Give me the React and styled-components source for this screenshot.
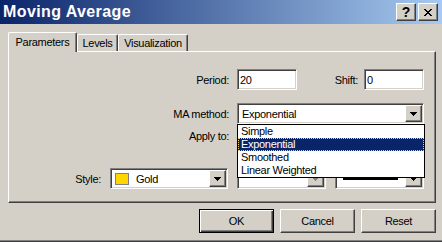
import React from 'react';
import styled, { createGlobalStyle, css } from 'styled-components';

const GlobalStyle = createGlobalStyle`
	html, body {
		margin: 0;
		padding: 0;
		background: #d4d0c8;
	}
	body {
		font-family: "Liberation Sans", Arial, sans-serif;
		font-size: 11px;
		color: #000;
	}
`;

const raised = css`
	border: 1px solid;
	border-color: #ffffff #404040 #404040 #ffffff;
	box-shadow: inset -1px -1px #808080, inset 1px 1px #d4d0c8;
`;
const sunken = css`
	border: 1px solid;
	border-color: #808080 #ffffff #ffffff #808080;
	box-shadow: inset 1px 1px #404040, inset -1px -1px #d4d0c8;
`;

const Window = styled.div`
	width: 442px;
	height: 242px;
	box-sizing: border-box;
	background: #d4d0c8;
	border-bottom: 1px solid #404040;
	box-shadow: inset 0 -1px #808080;
	display: flex;
	flex-direction: column;
	overflow: hidden;
`;

//title bar
const TitleBar = styled.div`
	height: 24px;
	flex: none;
	display: flex;
	align-items: center;
	padding: 0 4px 0 3px;
	background: linear-gradient(to right, #0a246a, #a6caf0);
`;
const Title = styled.span`
	flex: 1;
	color: #fff;
	font-weight: bold;
	font-size: 16px;
	letter-spacing: 0.4px;
	white-space: nowrap;
`;
const TitleButton = styled.div`
	box-sizing: border-box;
	width: 20px;
	height: 18px;
	margin-left: 2px;
	${raised}
	background: #d4d0c8;
	display: flex;
	align-items: center;
	justify-content: center;
	font-weight: bold;
	font-size: 14px;
`;

//body
const Body = styled.div`
	flex: 1;
	padding: 8px 6px 0 8px;
	display: flex;
	flex-direction: column;
`;
const TabStrip = styled.div`
	height: 19px;
	display: flex;
	align-items: flex-end;
	position: relative;
	z-index: 1;
`;
const Tab = styled.div`
	box-sizing: border-box;
	width: ${props => props.$w}px;
	height: ${props => (props.$active ? 20 : 17)}px;
	margin-bottom: ${props => (props.$active ? -1 : 0)}px;
	border-top: 1px solid #fff;
	border-left: 1px solid #fff;
	border-right: 1px solid #404040;
	box-shadow: inset -1px 0 #808080;
	border-radius: 2px 2px 0 0;
	background: #d4d0c8;
	display: flex;
	justify-content: center;
	padding-top: ${props => (props.$active ? 3 : 2)}px;
	letter-spacing: -0.3px;
	white-space: nowrap;
`;
const Panel = styled.div`
	box-sizing: border-box;
	height: 152px;
	border: 1px solid;
	border-color: #fff #404040 #404040 #fff;
	box-shadow: inset -1px -1px #808080;
	display: flex;
	flex-direction: column;
	padding-top: 17px;
`;
const Row = styled.div`
	height: 21px;
	display: flex;
	align-items: center;
	margin-top: ${props => props.$mt || 0}px;
`;
const Label = styled.label`
	flex: none;
	width: ${props => props.$w}px;
	margin-right: ${props => props.$gap}px;
	text-align: right;
	letter-spacing: -0.3px;
	white-space: nowrap;
`;
const TextField = styled.input`
	box-sizing: border-box;
	width: ${props => props.$w}px;
	height: 21px;
	${sunken}
	background: #fff;
	padding: 0 2px;
	margin: 0;
	font: 11px "Liberation Sans", Arial, sans-serif;
	letter-spacing: -0.3px;
	outline: none;
`;

//combos
const Combo = styled.div`
	position: relative;
	flex: none;
	box-sizing: border-box;
	width: ${props => props.$w}px;
	height: 21px;
	margin-right: ${props => props.$gap || 0}px;
	${sunken}
	background: #fff;
	display: flex;
	align-items: center;
	padding-left: 2px;
`;
const ComboText = styled.span`
	flex: 1;
	padding-left: 2px;
	letter-spacing: -0.3px;
	white-space: nowrap;
`;
const ComboFill = styled.div`
	flex: 1;
	display: flex;
	align-items: center;
`;
const Swatch = styled.span`
	box-sizing: border-box;
	width: 14px;
	height: 12px;
	margin: 0 5px 0 2px;
	background: ${props => props.$color};
	border: 1px solid #808080;
`;
const LineSample = styled.span`
	width: 55px;
	height: 2px;
	margin-left: 5px;
	background: #000;
`;
const ArrowButton = styled.div`
	box-sizing: border-box;
	flex: none;
	width: 17px;
	height: 17px;
	margin-right: 1px;
	${raised}
	background: #d4d0c8;
	display: flex;
	align-items: center;
	justify-content: center;
	color: ${props => (props.$disabled ? '#808080' : '#000')};
`;
const DropList = styled.div`
	position: absolute;
	top: calc(100% + 1px);
	left: -1px;
	width: 188px;
	box-sizing: border-box;
	border: 1px solid #000;
	background: #fff;
	z-index: 10;
`;
const DropItem = styled.div`
	height: 13px;
	line-height: 13px;
	padding-left: 3px;
	letter-spacing: -0.3px;
	white-space: nowrap;
	background: ${props => (props.$selected ? '#0a246a' : '#fff')};
	color: ${props => (props.$selected ? '#fff' : '#000')};
	outline: ${props => (props.$selected ? '1px dotted #f0d070' : 'none')};
	outline-offset: -1px;
`;

//buttons
const ButtonRow = styled.div`
	display: flex;
	justify-content: flex-end;
	gap: 6px;
	margin-top: 6px;
`;
const Button = styled.div`
	box-sizing: border-box;
	width: 75px;
	height: 24px;
	background: #d4d0c8;
	display: flex;
	align-items: center;
	justify-content: center;
	letter-spacing: -0.3px;
	${props =>
		props.$default
			? css`
					border: 1px solid #000;
					box-shadow: inset 1px 1px #fff, inset -1px -1px #404040,
						inset -2px -2px #808080;
			  `
			: raised}
`;

const Arrow = () => (
	<svg width='7' height='4' viewBox='0 0 7 4' shapeRendering='crispEdges'>
		<path d='M0 0h7v1h-1v1h-1v1h-1v1h-1v-1h-1v-1h-1v-1h-1z' fill='currentColor' />
	</svg>
);

const CloseIcon = () => (
	<svg width='8' height='7' viewBox='0 0 8 7' shapeRendering='crispEdges'>
		<path
			d='M0 0h2v1h1v1h2v-1h1v-1h2v1h-1v1h-1v1h-1v1h1v1h1v1h1v1h-2v-1h-1v-1h-2v1h-1v1h-2v-1h1v-1h1v-1h1v-1h-1v-1h-1v-1h-1z'
			fill='#000'
		/>
	</svg>
);

const methods = ['Simple', 'Exponential', 'Smoothed', 'Linear Weighted'];

const App = () => (
	<>
		<GlobalStyle />
		<Window>
			<TitleBar>
				<Title>Moving Average</Title>
				<TitleButton>?</TitleButton>
				<TitleButton>
					<CloseIcon />
				</TitleButton>
			</TitleBar>
			<Body>
				<TabStrip>
					<Tab $w={69} $active>
						Parameters
					</Tab>
					<Tab $w={41}>Levels</Tab>
					<Tab $w={70}>Visualization</Tab>
				</TabStrip>
				<Panel>
					<Row>
						<Label $w={220} $gap={8}>
							Period:
						</Label>
						<TextField $w={60} defaultValue='20' readOnly />
						<Label $w={61} $gap={6}>
							Shift:
						</Label>
						<TextField $w={60} defaultValue='0' readOnly />
					</Row>
					<Row $mt={13}>
						<Label $w={220} $gap={8}>
							MA method:
						</Label>
						<Combo $w={187}>
							<ComboText>Exponential</ComboText>
							<ArrowButton>
								<Arrow />
							</ArrowButton>
							<DropList>
								{methods.map(m => (
									<DropItem key={m} $selected={m === 'Exponential'}>
										{m}
									</DropItem>
								))}
							</DropList>
						</Combo>
					</Row>
					<Row $mt={1}>
						<Label $w={220} $gap={8}>
							Apply to:
						</Label>
						<Combo $w={187}>
							<ComboFill />
							<ArrowButton>
								<Arrow />
							</ArrowButton>
						</Combo>
					</Row>
					<Row $mt={22}>
						<Label $w={92} $gap={9}>
							Style:
						</Label>
						<Combo $w={118} $gap={9}>
							<Swatch $color='#ffd700' />
							<ComboText>Gold</ComboText>
							<ArrowButton>
								<Arrow />
							</ArrowButton>
						</Combo>
						<Combo $w={89} $gap={9}>
							<ComboFill />
							<ArrowButton $disabled>
								<Arrow />
							</ArrowButton>
						</Combo>
						<Combo $w={89}>
							<ComboFill>
								<LineSample />
							</ComboFill>
							<ArrowButton>
								<Arrow />
							</ArrowButton>
						</Combo>
					</Row>
				</Panel>
				<ButtonRow>
					<Button $default>OK</Button>
					<Button>Cancel</Button>
					<Button>Reset</Button>
				</ButtonRow>
			</Body>
		</Window>
	</>
);

export default App;
